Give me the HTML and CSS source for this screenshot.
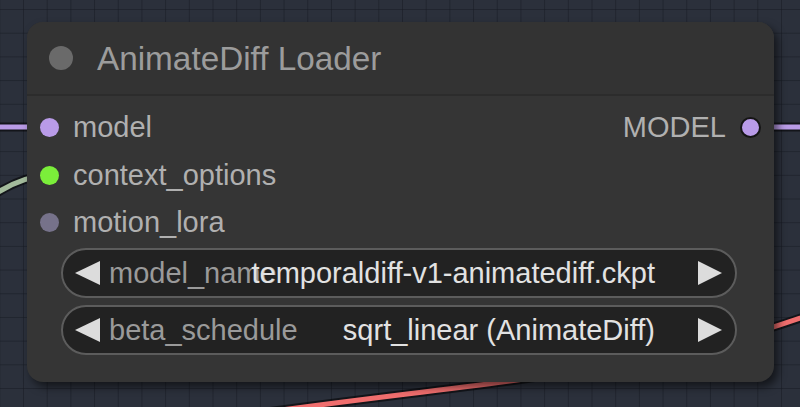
FILE: index.html
```html
<!DOCTYPE html>
<html>
<head>
<meta charset="utf-8">
<link rel="stylesheet" href="styles.css">
</head>
<body>
<div class="canvas">
  <svg class="links" width="800" height="407" viewBox="0 0 800 407">
    <g class="shadow">
      <path d="M -10 127 L 60 127"/>
      <path d="M 740 127 L 810 127"/>
      <path d="M -8 196 Q 22 176 50 175"/>
      <path d="M 180 424 C 480 380, 640 378, 820 311"/>
    </g>
    <path class="l-purple" d="M -10 127 L 60 127"/>
    <path class="l-purple" d="M 740 127 L 810 127"/>
    <path class="l-green" d="M -8 196 Q 22 176 50 175"/>
    <path class="l-red" d="M 180 424 C 480 380, 640 378, 820 311"/>
  </svg>

  <div class="node">
    <div class="title">
      <span class="title-dot"></span>
      <span class="title-text">AnimateDiff Loader</span>
    </div>
    <div class="node-body">
      <div class="slot-row">
        <div class="input"><span class="dot dot-model"></span><span>model</span></div>
        <div class="output"><span>MODEL</span><span class="dot dot-out"></span></div>
      </div>
      <div class="slot-row">
        <div class="input"><span class="dot dot-context"></span><span>context_options</span></div>
      </div>
      <div class="slot-row">
        <div class="input"><span class="dot dot-lora"></span><span>motion_lora</span></div>
      </div>

      <div class="widgets">
        <div class="widget">
          <svg class="arrow" width="25" height="24" viewBox="0 0 25 24"><polygon points="0,12 25,0 25,24"/></svg>
          <div class="w-text">
            <span class="w-label">model_name</span>
            <span class="w-value">temporaldiff-v1-animatediff.ckpt</span>
          </div>
          <svg class="arrow" width="24" height="24" viewBox="0 0 24 24"><polygon points="0,0 24,12 0,24"/></svg>
        </div>
        <div class="widget">
          <svg class="arrow" width="25" height="24" viewBox="0 0 25 24"><polygon points="0,12 25,0 25,24"/></svg>
          <div class="w-text">
            <span class="w-label">beta_schedule</span>
            <span class="w-value">sqrt_linear (AnimateDiff)</span>
          </div>
          <svg class="arrow" width="24" height="24" viewBox="0 0 24 24"><polygon points="0,0 24,12 0,24"/></svg>
        </div>
      </div>
    </div>
  </div>
</div>
</body>
</html>
```

FILE: styles.css
```css
html, body {
  margin: 0;
  padding: 0;
}

body {
  width: 800px;
  height: 407px;
  overflow: hidden;
  background-color: #2b303b;
  background-image:
    linear-gradient(90deg, rgba(20, 24, 32, 0.45) 1px, transparent 1px),
    linear-gradient(0deg, rgba(20, 24, 32, 0.45) 1px, transparent 1px);
  background-size: 23.7px 23.7px;
  background-position: 23px 10px;
  font-family: "Liberation Sans", Arial, sans-serif;
}

.canvas {
  position: relative;
  width: 800px;
  height: 407px;
}

.links {
  position: absolute;
  left: 0;
  top: 0;
}

.links path {
  fill: none;
  stroke-linecap: round;
}

.links .shadow path {
  stroke: rgba(0, 0, 0, 0.55);
  stroke-width: 9;
}

.l-purple { stroke: #b99be6; stroke-width: 5; }
.l-green { stroke: #a3bb9c; stroke-width: 5; }
.l-red { stroke: #f06e6e; stroke-width: 5; }

.node {
  position: absolute;
  left: 27px;
  top: 22px;
  width: 747px;
  height: 360px;
  border-radius: 16px;
  background: #353535;
  box-shadow: 4px 5px 8px rgba(0, 0, 0, 0.55);
  display: flex;
  flex-direction: column;
  overflow: hidden;
}

.title {
  height: 72px;
  flex: none;
  background: #333333;
  border-bottom: 2px solid #2c2c2c;
  display: flex;
  align-items: center;
  box-sizing: content-box;
}

.title-dot {
  width: 24px;
  height: 24px;
  border-radius: 50%;
  background: #6a6a6a;
  margin-left: 22px;
  flex: none;
}

.title-text {
  margin-left: 24px;
  font-size: 33.3px;
  color: #9c9c9c;
  line-height: 1;
  margin-top: 1px;
}

.node-body {
  padding-top: 8px;
  display: flex;
  flex-direction: column;
}

.slot-row {
  height: 47.4px;
  display: flex;
  align-items: center;
  justify-content: space-between;
  font-size: 29px;
  color: #b0b0b0;
}

.input, .output {
  display: flex;
  align-items: center;
}

.input .dot {
  margin-left: 12.5px;
  margin-right: 14.5px;
}

.output .dot {
  margin-left: 14px;
  margin-right: 13px;
}

.dot {
  width: 19px;
  height: 19px;
  border-radius: 50%;
  flex: none;
  box-sizing: border-box;
}

.dot-model { background: #b99be8; }
.dot-context { background: #7bee3a; }
.dot-lora { background: #76728a; }
.dot-out {
  width: 21px;
  height: 21px;
  background: #b99be8;
  border: 2.5px solid #151515;
}

.widgets {
  margin: 2px 37px 0 34px;
  display: flex;
  flex-direction: column;
  gap: 7px;
}

.widget {
  height: 50px;
  box-sizing: border-box;
  border: 2px solid #5c5c5c;
  border-radius: 25px;
  background: #222222;
  display: flex;
  align-items: center;
  padding: 0 13px 0 12px;
}

.arrow {
  flex: none;
  fill: #dcdcdc;
}

.w-text {
  flex: 1;
  display: grid;
  margin: 0 43px 0 9px;
  font-size: 29px;
  line-height: 1;
  white-space: nowrap;
}

.w-label {
  grid-area: 1 / 1;
  justify-self: start;
  color: #9a9a9a;
}

.w-value {
  grid-area: 1 / 1;
  justify-self: end;
  color: #e2e2e2;
}
```
